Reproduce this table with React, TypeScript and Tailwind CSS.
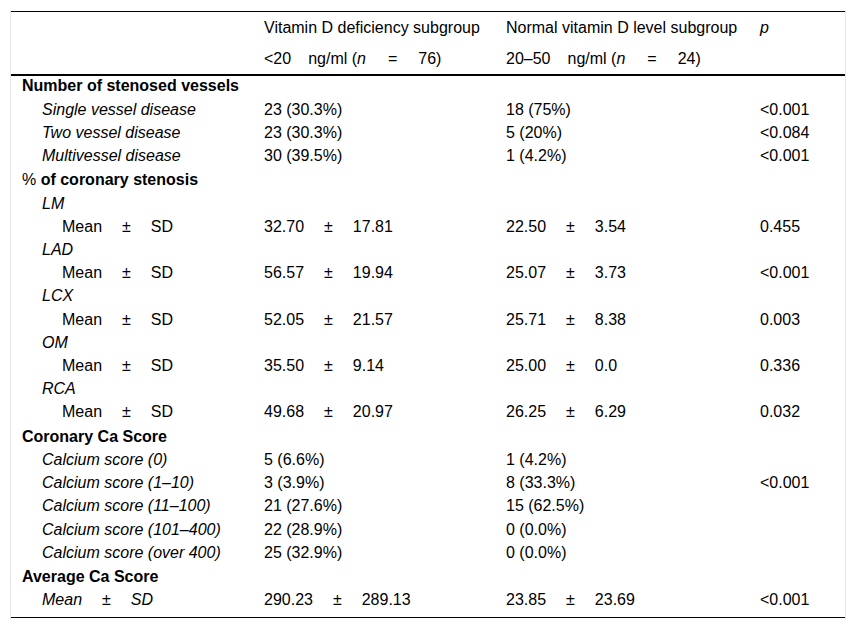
import React from "react";

type Row = {
  label: React.ReactNode;
  level: 0 | 1 | 2;
  low?: React.ReactNode;
  normal?: React.ReactNode;
  p?: string;
  section?: boolean;
};

const Gap: React.FC<{ w?: string }> = ({ w = "w-[20px]" }) => <span className={`inline-block ${w}`} />;

const pm = (a: string, b: string) => (
  <>
    {a}
    <Gap />±<Gap />
    {b}
  </>
);

const meanSd = pm("Mean", "SD");

const rows: Row[] = [
  { label: <b>Number of stenosed vessels</b>, level: 0, section: true },
  { label: <i>Single vessel disease</i>, level: 1, low: "23 (30.3%)", normal: "18 (75%)", p: "<0.001" },
  { label: <i>Two vessel disease</i>, level: 1, low: "23 (30.3%)", normal: "5 (20%)", p: "<0.084" },
  { label: <i>Multivessel disease</i>, level: 1, low: "30 (39.5%)", normal: "1 (4.2%)", p: "<0.001" },
  {
    label: (
      <>
        % <b>of coronary stenosis</b>
      </>
    ),
    level: 0,
    section: true,
  },
  { label: <i>LM</i>, level: 1 },
  { label: meanSd, level: 2, low: pm("32.70", "17.81"), normal: pm("22.50", "3.54"), p: "0.455" },
  { label: <i>LAD</i>, level: 1 },
  { label: meanSd, level: 2, low: pm("56.57", "19.94"), normal: pm("25.07", "3.73"), p: "<0.001" },
  { label: <i>LCX</i>, level: 1 },
  { label: meanSd, level: 2, low: pm("52.05", "21.57"), normal: pm("25.71", "8.38"), p: "0.003" },
  { label: <i>OM</i>, level: 1 },
  { label: meanSd, level: 2, low: pm("35.50", "9.14"), normal: pm("25.00", "0.0"), p: "0.336" },
  { label: <i>RCA</i>, level: 1 },
  { label: meanSd, level: 2, low: pm("49.68", "20.97"), normal: pm("26.25", "6.29"), p: "0.032" },
  { label: <b>Coronary Ca Score</b>, level: 0, section: true },
  { label: <i>Calcium score (0)</i>, level: 1, low: "5 (6.6%)", normal: "1 (4.2%)" },
  { label: <i>Calcium score (1–10)</i>, level: 1, low: "3 (3.9%)", normal: "8 (33.3%)", p: "<0.001" },
  { label: <i>Calcium score (11–100)</i>, level: 1, low: "21 (27.6%)", normal: "15 (62.5%)" },
  { label: <i>Calcium score (101–400)</i>, level: 1, low: "22 (28.9%)", normal: "0 (0.0%)" },
  { label: <i>Calcium score (over 400)</i>, level: 1, low: "25 (32.9%)", normal: "0 (0.0%)" },
  { label: <b>Average Ca Score</b>, level: 0, section: true },
  { label: <i>{meanSd}</i>, level: 1, low: pm("290.23", "289.13"), normal: pm("23.85", "23.69"), p: "<0.001" },
];

const indent = ["pl-[11px]", "pl-[31px]", "pl-[51px]"];

export default function App() {
  return (
    <div className="min-h-screen bg-white font-['Liberation_Sans',Arial,sans-serif] text-[16px] leading-[19.2px] text-black">
      <div className="ml-[10px] mt-[10px] w-[836px] border-x border-[#e6e6e6] pt-[1px] pb-[1px]">
        <div className="border-t border-black">
          {/* header */}
          <div className="grid grid-cols-[242px_242px_254px_96px] border-b-2 border-black">
            <div className="py-[6px]" />
            <div className="py-[6px] pl-[11px] whitespace-nowrap">Vitamin D deficiency subgroup</div>
            <div className="py-[6px] pl-[11px] whitespace-nowrap">Normal vitamin D level subgroup</div>
            <div className="py-[6px] pl-[11px]">
              <i>p</i>
            </div>
            <div className="py-[6px]" />
            <div className="py-[6px] pl-[11px] whitespace-nowrap">
              &lt;20<Gap w="w-[17px]" />ng/ml (<i>n</i>
              <Gap w="w-[22px]" />=<Gap w="w-[21px]" />
              76)
            </div>
            <div className="py-[6px] pl-[11px] whitespace-nowrap">
              20–50<Gap w="w-[17px]" />ng/ml (<i>n</i>
              <Gap w="w-[22px]" />=<Gap w="w-[21px]" />
              24)
            </div>
            <div className="py-[6px]" />
          </div>

          {/* body */}
          <div className="border-b border-black">
            {rows.map((row, i) => {
              const last = i === rows.length - 1;
              const pad = `${row.section && i > 0 ? "pt-[1.2px]" : "pt-0"} ${last ? "pb-[7px]" : "pb-[4px]"}`;
              return (
                <div key={i} className="grid grid-cols-[242px_242px_254px_96px]">
                  <div className={`${indent[row.level]} ${pad} whitespace-nowrap`}>{row.label}</div>
                  <div className={`pl-[11px] ${pad} whitespace-nowrap`}>{row.low}</div>
                  <div className={`pl-[11px] ${pad} whitespace-nowrap`}>{row.normal}</div>
                  <div className={`pl-[11px] ${pad} whitespace-nowrap`}>{row.p}</div>
                </div>
              );
            })}
          </div>
        </div>
      </div>
    </div>
  );
}
